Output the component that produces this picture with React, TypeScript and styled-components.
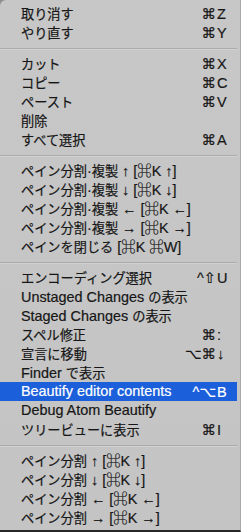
import React from 'react'
import styled, { createGlobalStyle, css } from 'styled-components'

const GlobalStyle = createGlobalStyle`
  html, body {
    margin: 0;
    padding: 0;
    background: #8e8e8e;
  }
  body {
    font-family: 'Liberation Sans', 'Noto Sans CJK JP', sans-serif;
  }
`

const Menu = styled.div`
  width: 241px;
  height: 532px;
  box-sizing: border-box;
  padding: 4px 3px 3px 0;
  background: linear-gradient(180deg, #c7c7c7 0%, #c4c4c4 100%);
  border-top-left-radius: 6px;
  border-right: 1px solid #a9a9a9;
  border-bottom: 2px solid #262626;
  display: flex;
  flex-direction: column;
  overflow: hidden;
`

const Row = styled.div<{ $active?: boolean }>`
  height: 19px;
  display: flex;
  align-items: center;
  padding: 0 8px 0 21px;
  color: #161616;
  font-size: 14.4px;
  white-space: nowrap;
  -webkit-text-stroke: 0.2px currentColor;
  ${(p) =>
    p.$active &&
    css`
      background: #1b60da;
      color: #ffffff;
    `}
`

const Label = styled.span`
  flex: 1;
  line-height: 19px;
`

const Ja = styled.span`
  font-family: 'Noto Sans CJK JP', sans-serif;
  font-size: 13.2px;
`

const Shortcut = styled.span`
  display: flex;
  align-items: center;
  font-family: 'Liberation Sans', 'DejaVu Sans', sans-serif;
  font-size: 14.5px;
`

const Mods = styled.span`
  text-align: right;
  margin-right: 1px;
`

const Key = styled.span`
  width: 12px;
  text-align: left;
`

const Separator = styled.div`
  height: 12px;
  flex: none;
  display: flex;
  align-items: center;
  &::after {
    content: '';
    display: block;
    width: 100%;
    height: 1px;
    background: #ababab;
    box-shadow: 0 1px 0 #d2d2d2;
  }
`

type Item = {
  label: string
  mods?: string
  key?: string
  active?: boolean
}

const groups: Item[][] = [
  [
    { label: '取り消す', mods: '⌘', key: 'Z' },
    { label: 'やり直す', mods: '⌘', key: 'Y' },
  ],
  [
    { label: 'カット', mods: '⌘', key: 'X' },
    { label: 'コピー', mods: '⌘', key: 'C' },
    { label: 'ペースト', mods: '⌘', key: 'V' },
    { label: '削除' },
    { label: 'すべて選択', mods: '⌘', key: 'A' },
  ],
  [
    { label: 'ペイン分割·複製 ↑ [⌘K ↑]' },
    { label: 'ペイン分割·複製 ↓ [⌘K ↓]' },
    { label: 'ペイン分割·複製 ← [⌘K ←]' },
    { label: 'ペイン分割·複製 → [⌘K →]' },
    { label: 'ペインを閉じる [⌘K ⌘W]' },
  ],
  [
    { label: 'エンコーディング選択', mods: '^⇧', key: 'U' },
    { label: 'Unstaged Changes の表示' },
    { label: 'Staged Changes の表示' },
    { label: 'スペル修正', mods: '⌘', key: ':' },
    { label: '宣言に移動', mods: '⌥⌘', key: '↓' },
    { label: 'Finder で表示' },
    { label: 'Beautify editor contents', mods: '^⌥', key: 'B', active: true },
    { label: 'Debug Atom Beautify' },
    { label: 'ツリービューに表示', mods: '⌘', key: 'I' },
  ],
  [
    { label: 'ペイン分割 ↑ [⌘K ↑]' },
    { label: 'ペイン分割 ↓ [⌘K ↓]' },
    { label: 'ペイン分割 ← [⌘K ←]' },
    { label: 'ペイン分割 → [⌘K →]' },
  ],
]

// Japanese runs are set a bit smaller than the latin text, as in the menu font
const jaRun = /([\u3040-\u30ff\u3400-\u9fff]+)/

const renderLabel = (text: string) =>
  text.split(jaRun).map((part, i) =>
    i % 2 === 1 ? <Ja key={i}>{part}</Ja> : <React.Fragment key={i}>{part}</React.Fragment>
  )

const App: React.FC = () => {
  return (
    <>
      <GlobalStyle />
      <Menu>
        {groups.map((group, gi) => (
          <React.Fragment key={gi}>
            {gi > 0 && <Separator />}
            {group.map((item) => (
              <Row key={item.label} $active={item.active}>
                <Label>{renderLabel(item.label)}</Label>
                {item.key && (
                  <Shortcut>
                    <Mods>{item.mods}</Mods>
                    <Key>{item.key}</Key>
                  </Shortcut>
                )}
              </Row>
            ))}
          </React.Fragment>
        ))}
      </Menu>
    </>
  )
}

export default App
